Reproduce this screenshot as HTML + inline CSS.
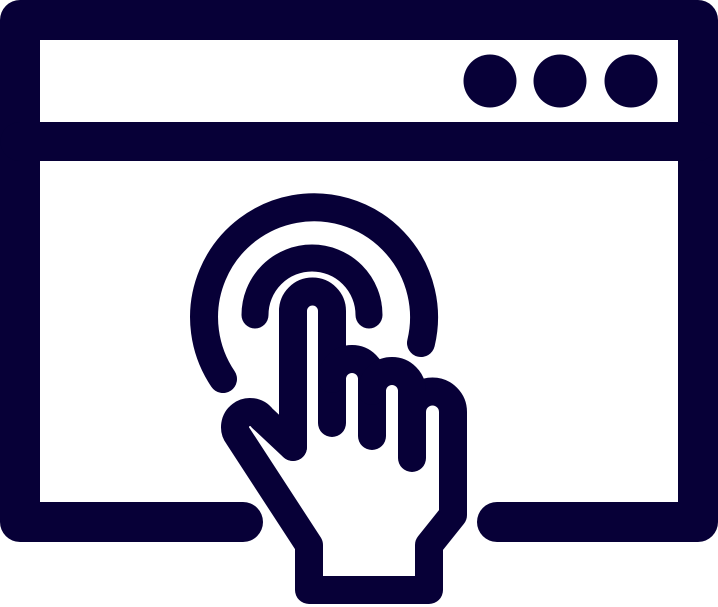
<!DOCTYPE html>
<html><head><style>html,body{margin:0;padding:0;background:#fff;width:718px;height:607px;overflow:hidden}</style></head>
<body>
<svg width="718" height="607" viewBox="0 0 718 607" xmlns="http://www.w3.org/2000/svg">
<g fill="none" stroke="#070037" stroke-linecap="round" stroke-linejoin="round">
<path d="M243,522 H20 V20 H698 V522 H497" stroke-width="40"/>
<path d="M20,141.5 H698" stroke-width="39"/>
<path d="M223,379 A110,110 0 1 1 421,343" stroke-width="28"/>
<path d="M255,315 A57,57 0 0 1 369,315" stroke-width="27"/>
<path d="M412,412 A20.5,20.5 0 0 1 453,412 L453,515 L429,545 L429,590 L309,590 L309,545 L238,436 A14,14 0 0 1 262,418 L293,447 L293,311" fill="#fff" stroke-width="28"/>
<path d="M293,447 L293,311 A19.5,19.5 0 0 1 332,311 L332,423" stroke-width="28"/>
<path d="M332,379 A20,20 0 0 1 372,379 L372,436" stroke-width="28"/>
<path d="M372,391 A20,20 0 0 1 412,391 L412,458" stroke-width="28"/>
</g>
<g fill="#070037">
<ellipse cx="490" cy="81" rx="26.5" ry="26.5"/>
<ellipse cx="560" cy="81" rx="26.5" ry="26.5"/>
<ellipse cx="631" cy="81" rx="26.5" ry="26.5"/>
</g>
</svg>
</body></html>
